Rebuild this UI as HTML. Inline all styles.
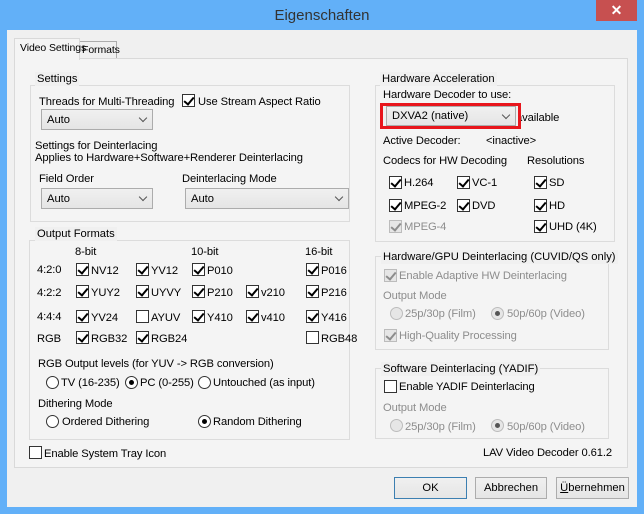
<!DOCTYPE html>
<html><head><meta charset="utf-8"><style>
*{margin:0;padding:0;box-sizing:border-box}
body{width:644px;height:514px;background:#62b0f8;position:relative;overflow:hidden;font-family:"Liberation Sans",sans-serif;font-size:11.2px;color:#000}
.a{position:absolute}
.t{position:absolute;white-space:nowrap;line-height:14px;font-size:11.2px;margin-top:1px;letter-spacing:-0.1px}
.d{color:#8d8d8d}
.g{position:absolute;border:1px solid #dcdcdc}
.gl{position:absolute;background:#f0f0f0;padding:0 2px;white-space:nowrap;line-height:14px;font-size:11.2px;margin-top:1px}
.cb{position:absolute;width:13px;height:13px;border:1px solid #333;background:#fff}
.cb.k::after{content:"";position:absolute;left:3px;top:0px;width:4px;height:8px;border:solid #000;border-width:0 2px 2px 0;transform:rotate(40deg)}
.cb.dk{border-color:#bcbcbc;background:#e6e6e6}
.cb.dk::after{content:"";position:absolute;left:3px;top:0px;width:4px;height:8px;border:solid #8d8d8d;border-width:0 2px 2px 0;transform:rotate(40deg)}
.rb{position:absolute;width:13px;height:13px;border:1px solid #333;border-radius:50%;background:#fff}
.rb.s::after{content:"";position:absolute;left:3px;top:3px;width:5px;height:5px;border-radius:50%;background:#000}
.rb.dis{border-color:#bcbcbc;background:#e6e6e6}
.rb.dis.s::after{background:#555}
.co{position:absolute;border:1px solid #acacac;background:linear-gradient(#f0f0f0,#e5e5e5)}
.co span{position:absolute;left:5px;top:3px;line-height:14px}
.co i{position:absolute;right:6px;top:5px;width:6px;height:6px;border:solid #555;border-width:0 1.5px 1.5px 0;transform:rotate(45deg)}
.btn{position:absolute;height:22px;border:1px solid #acacac;background:linear-gradient(#f0f0f0,#e5e5e5);text-align:center;line-height:20px;font-size:11.2px}
</style></head><body>
<div class="a" style="left:0;top:0;width:644px;height:30px;text-align:center;font-size:15px;line-height:32px;color:#333">Eigenschaften</div>
<div class="a" style="left:596px;top:0;width:41px;height:21px;background:#c75050;color:#fff;text-align:center;font-size:14px;line-height:20px;font-weight:bold">✕</div>
<div class="a" style="left:7px;top:30px;width:630px;height:477px;background:#f0f0f0"></div>
<!-- tabs -->
<div class="a" style="left:79px;top:41px;width:38px;height:18px;border:1px solid #acacac;border-bottom:none;background:#f0f0f0"></div>
<div class="t" style="left:82px;top:42px;font-size:10.5px">Formats</div>
<div class="a" style="left:14px;top:58px;width:614px;height:410px;border:1px solid #d9d9d9;background:#f4f4f4"></div>
<div class="a" style="left:14px;top:38px;width:66px;height:22px;border:1px solid #d9d9d9;border-bottom:none;background:#f4f4f4"></div>
<div class="t" style="left:20px;top:40px;font-size:10.5px">Video Settings</div>

<!-- Settings group -->
<div class="g" style="left:30px;top:85px;width:320px;height:137px"></div>
<div class="gl" style="left:35px;top:71px">Settings</div>
<div class="t" style="left:39px;top:94px">Threads for Multi-Threading</div>
<div class="co" style="left:41px;top:109px;width:112px;height:21px"><span>Auto</span><i></i></div>
<div class="cb k" style="left:182px;top:94px"></div>
<div class="t" style="left:198px;top:94px">Use Stream Aspect Ratio</div>
<div class="t" style="left:35px;top:138px">Settings for Deinterlacing</div>
<div class="t" style="left:35px;top:150px">Applies to Hardware+Software+Renderer Deinterlacing</div>
<div class="t" style="left:39px;top:171px">Field Order</div>
<div class="co" style="left:41px;top:188px;width:112px;height:21px"><span>Auto</span><i></i></div>
<div class="t" style="left:182px;top:171px">Deinterlacing Mode</div>
<div class="co" style="left:185px;top:188px;width:164px;height:21px"><span>Auto</span><i></i></div>

<!-- Output formats -->
<div class="g" style="left:29px;top:240px;width:321px;height:200px"></div>
<div class="gl" style="left:35px;top:226px">Output Formats</div>
<div class="t" style="left:75px;top:244px">8-bit</div>
<div class="t" style="left:191px;top:244px">10-bit</div>
<div class="t" style="left:305px;top:244px">16-bit</div>
<div class="t" style="left:37px;top:262px">4:2:0</div>
<div class="t" style="left:37px;top:285px">4:2:2</div>
<div class="t" style="left:37px;top:309px">4:4:4</div>
<div class="t" style="left:37px;top:331px">RGB</div>
<div class="cb k" style="left:76px;top:263px"></div><div class="t" style="left:91px;top:263px">NV12</div>
<div class="cb k" style="left:136px;top:263px"></div><div class="t" style="left:151px;top:263px">YV12</div>
<div class="cb k" style="left:192px;top:263px"></div><div class="t" style="left:207px;top:263px">P010</div>
<div class="cb k" style="left:306px;top:263px"></div><div class="t" style="left:321px;top:263px">P016</div>
<div class="cb k" style="left:76px;top:285px"></div><div class="t" style="left:91px;top:285px">YUY2</div>
<div class="cb k" style="left:136px;top:285px"></div><div class="t" style="left:151px;top:285px">UYVY</div>
<div class="cb k" style="left:192px;top:285px"></div><div class="t" style="left:207px;top:285px">P210</div>
<div class="cb k" style="left:246px;top:285px"></div><div class="t" style="left:261px;top:285px">v210</div>
<div class="cb k" style="left:306px;top:285px"></div><div class="t" style="left:321px;top:285px">P216</div>
<div class="cb k" style="left:76px;top:310px"></div><div class="t" style="left:91px;top:310px">YV24</div>
<div class="cb" style="left:136px;top:310px"></div><div class="t" style="left:151px;top:310px">AYUV</div>
<div class="cb k" style="left:192px;top:310px"></div><div class="t" style="left:207px;top:310px">Y410</div>
<div class="cb k" style="left:246px;top:310px"></div><div class="t" style="left:261px;top:310px">v410</div>
<div class="cb k" style="left:306px;top:310px"></div><div class="t" style="left:321px;top:310px">Y416</div>
<div class="cb k" style="left:76px;top:331px"></div><div class="t" style="left:91px;top:331px">RGB32</div>
<div class="cb k" style="left:136px;top:331px"></div><div class="t" style="left:151px;top:331px">RGB24</div>
<div class="cb" style="left:306px;top:331px"></div><div class="t" style="left:321px;top:331px">RGB48</div>
<div class="t" style="left:38px;top:356px">RGB Output levels (for YUV -&gt; RGB conversion)</div>
<div class="rb" style="left:46px;top:376px"></div><div class="t" style="left:61px;top:375px">TV (16-235)</div>
<div class="rb s" style="left:125px;top:376px"></div><div class="t" style="left:140px;top:375px">PC (0-255)</div>
<div class="rb" style="left:198px;top:376px"></div><div class="t" style="left:213px;top:375px">Untouched (as input)</div>
<div class="t" style="left:38px;top:396px">Dithering Mode</div>
<div class="rb" style="left:46px;top:415px"></div><div class="t" style="left:62px;top:414px">Ordered Dithering</div>
<div class="rb s" style="left:198px;top:415px"></div><div class="t" style="left:213px;top:414px">Random Dithering</div>
<div class="cb" style="left:29px;top:446px"></div><div class="t" style="left:44px;top:446px">Enable System Tray Icon</div>

<!-- Hardware acceleration -->
<div class="g" style="left:375px;top:85px;width:240px;height:157px"></div>
<div class="gl" style="left:380px;top:71px">Hardware Acceleration</div>
<div class="t" style="left:383px;top:87px">Hardware Decoder to use:</div>
<div class="t" style="left:516px;top:110px">available</div>
<div class="a" style="left:380px;top:103px;width:141px;height:26px;border:3px solid #e8151c;background:#f0f0f0"></div>
<div class="co" style="left:386px;top:106px;width:130px;height:20px"><span style="top:2px">DXVA2 (native)</span><i></i></div>
<div class="t" style="left:383px;top:133px">Active Decoder:</div>
<div class="t" style="left:486px;top:133px">&lt;inactive&gt;</div>
<div class="t" style="left:383px;top:153px">Codecs for HW Decoding</div>
<div class="t" style="left:527px;top:153px">Resolutions</div>
<div class="cb k" style="left:389px;top:176px"></div><div class="t" style="left:404px;top:175px">H.264</div>
<div class="cb k" style="left:457px;top:176px"></div><div class="t" style="left:472px;top:175px">VC-1</div>
<div class="cb k" style="left:534px;top:176px"></div><div class="t" style="left:549px;top:175px">SD</div>
<div class="cb k" style="left:389px;top:199px"></div><div class="t" style="left:404px;top:198px">MPEG-2</div>
<div class="cb k" style="left:457px;top:199px"></div><div class="t" style="left:472px;top:198px">DVD</div>
<div class="cb k" style="left:534px;top:199px"></div><div class="t" style="left:549px;top:198px">HD</div>
<div class="cb dk" style="left:389px;top:220px"></div><div class="t d" style="left:404px;top:219px">MPEG-4</div>
<div class="cb k" style="left:534px;top:220px"></div><div class="t" style="left:549px;top:219px">UHD (4K)</div>

<!-- HW/GPU deint -->
<div class="g" style="left:375px;top:256px;width:234px;height:94px"></div>
<div class="gl" style="left:381px;top:249px">Hardware/GPU Deinterlacing (CUVID/QS only)</div>
<div class="cb dk" style="left:384px;top:269px"></div><div class="t d" style="left:399px;top:268px">Enable Adaptive HW Deinterlacing</div>
<div class="t d" style="left:383px;top:288px">Output Mode</div>
<div class="rb dis" style="left:390px;top:307px"></div><div class="t d" style="left:405px;top:306px">25p/30p (Film)</div>
<div class="rb dis s" style="left:491px;top:307px"></div><div class="t d" style="left:507px;top:306px">50p/60p (Video)</div>
<div class="cb dk" style="left:384px;top:329px"></div><div class="t d" style="left:399px;top:328px">High-Quality Processing</div>

<!-- SW deint -->
<div class="g" style="left:375px;top:368px;width:234px;height:71px"></div>
<div class="gl" style="left:381px;top:361px">Software Deinterlacing (YADIF)</div>
<div class="cb" style="left:384px;top:380px"></div><div class="t" style="left:399px;top:379px">Enable YADIF Deinterlacing</div>
<div class="t d" style="left:383px;top:400px">Output Mode</div>
<div class="rb dis" style="left:390px;top:419px"></div><div class="t d" style="left:405px;top:419px">25p/30p (Film)</div>
<div class="rb dis s" style="left:491px;top:419px"></div><div class="t d" style="left:507px;top:419px">50p/60p (Video)</div>
<div class="t" style="left:483px;top:445px">LAV Video Decoder 0.61.2</div>

<!-- buttons -->
<div class="btn" style="left:394px;top:477px;width:73px;border-color:#3c7fb1">OK</div>
<div class="btn" style="left:475px;top:477px;width:72px">Abbrechen</div>
<div class="btn" style="left:556px;top:477px;width:73px"><u>Ü</u>bernehmen</div>
</body></html>
